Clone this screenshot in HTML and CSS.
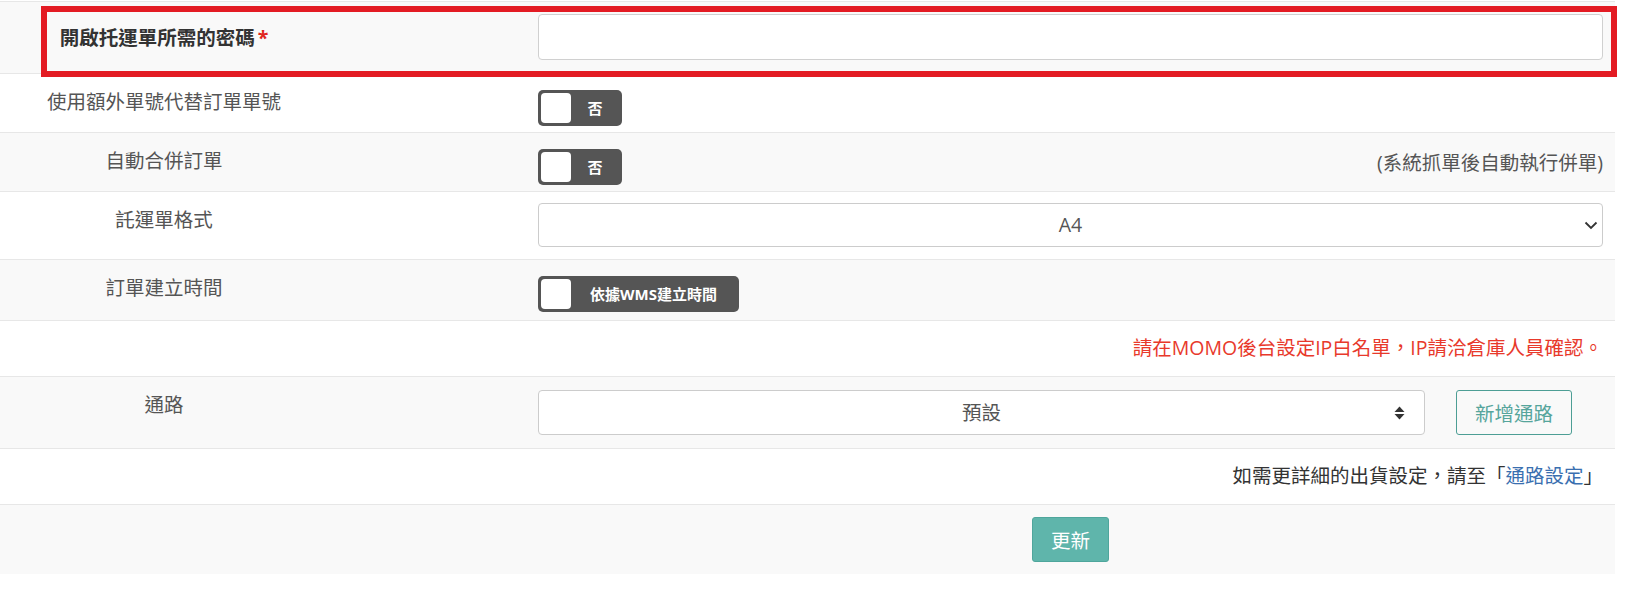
FILE: index.html
```html
<!DOCTYPE html>
<html lang="zh-Hant">

<head>
    <meta charset="UTF-8">
    <title>出貨設定</title>
    <link rel="stylesheet" href="styles.css">
</head>

<body>
    <div class="settings">
        <div class="settings-row row-input">
            <label class="field-label required-label">開啟托運單所需的密碼<span class="required">*</span></label>
            <div class="field-control">
                <input type="text" class="text-input">
            </div>
            <div class="highlight-box"></div>
        </div>

        <div class="settings-row row-toggle">
            <div class="field-label">使用額外單號代替訂單單號</div>
            <div class="field-control">
                <span class="toggle"><span class="toggle-knob"></span><span class="toggle-text">否</span></span>
            </div>
        </div>

        <div class="settings-row row-toggle">
            <div class="field-label">自動合併訂單</div>
            <div class="field-control split">
                <span class="toggle"><span class="toggle-knob"></span><span class="toggle-text">否</span></span>
                <span class="note">(系統抓單後自動執行併單)</span>
            </div>
        </div>

        <div class="settings-row row-select">
            <div class="field-label">託運單格式</div>
            <div class="field-control">
                <div class="select">
                    A4
                    <svg class="select-arrow" width="14" height="9" viewBox="0 0 14 9">
                        <path d="M1.5 1.5 L7 7 L12.5 1.5" fill="none" stroke="#333" stroke-width="1.8" />
                    </svg>
                </div>
            </div>
        </div>

        <div class="settings-row row-toggle row-toggle-tall">
            <div class="field-label">訂單建立時間</div>
            <div class="field-control">
                <span class="toggle toggle-wide"><span class="toggle-knob"></span><span class="toggle-text">依據WMS建立時間</span></span>
            </div>
        </div>

        <div class="settings-row row-text">
            <div class="field-label"></div>
            <div class="field-control text-right warning">請在MOMO後台設定IP白名單，IP請洽倉庫人員確認。</div>
        </div>

        <div class="settings-row row-channel">
            <div class="field-label">通路</div>
            <div class="field-control channel">
                <div class="select">
                    預設
                    <svg class="sort-icon" width="11" height="14" viewBox="0 0 11 14">
                        <polygon points="0.5,6 5.5,0.5 10.5,6" fill="#333" />
                        <polygon points="0.5,8 10.5,8 5.5,13.5" fill="#333" />
                    </svg>
                </div>
                <button class="btn-outline">新增通路</button>
            </div>
        </div>

        <div class="settings-row row-text">
            <div class="field-label"></div>
            <div class="field-control text-right">如需更詳細的出貨設定，請至「<a href="#" class="link">通路設定</a>」</div>
        </div>

        <div class="settings-row row-submit">
            <div class="field-label"></div>
            <div class="field-control center">
                <button class="btn-primary">更新</button>
            </div>
        </div>
    </div>
</body>

</html>
```

FILE: styles.css
```css
/* Global styles */
* {
    box-sizing: border-box;
    margin: 0;
    padding: 0;
}

body {
    background-color: #fff;
    color: #333;
    font-family: "Open Sans", "Noto Sans CJK TC", sans-serif;
    font-size: 19.5px;
    line-height: 28px;
}

/* Settings table */
.settings {
    width: 1615px;
    margin-top: 1px;
}

.settings-row {
    display: grid;
    grid-template-columns: 328px 210px 1065px;
    padding-right: 12px;
    border-top: 1px solid #e7e7e7;
}

.settings-row:nth-child(odd) {
    background-color: #f9f9f9;
}

.field-label {
    grid-column: 1;
    text-align: center;
    color: #555;
    padding: 14px 0;
}

.field-control {
    grid-column: 3;
}

.text-right {
    text-align: right;
}

.center {
    display: flex;
    justify-content: center;
}

/* Row variants */
.row-input {
    position: relative;
}

.row-input .field-control {
    padding: 12px 0 13px;
}

.required-label {
    align-self: center;
    padding: 0;
    color: #333;
    font-weight: bold;
}

.required {
    color: #e0261f;
    margin-left: 3px;
}

.row-toggle .field-control {
    padding: 16px 0 6px;
}

.row-toggle-tall .field-control {
    padding-bottom: 8px;
}

.row-select .field-control {
    padding: 11px 0 12px;
}

.row-channel .field-control {
    padding: 13px 31px 13px 0;
}

.row-text .field-control {
    padding: 13px 0 14px;
}

.row-submit .field-control {
    padding: 12px 0;
}

.split {
    display: flex;
    justify-content: space-between;
    align-items: flex-start;
}

.split .note {
    color: #555;
}

.warning {
    color: #e8392b;
}

.link {
    color: #3a6fb0;
    text-decoration: none;
}

/* Red highlight around the password row */
.highlight-box {
    position: absolute;
    z-index: 2;
    left: 41px;
    top: 4px;
    width: 1576px;
    height: 71px;
    border: 6px solid #e31b23;
    pointer-events: none;
}

/* Inputs */
.text-input {
    display: block;
    width: 100%;
    height: 46px;
    border: 1px solid #d0d0d0;
    border-radius: 4px;
    background-color: #fff;
}

.select {
    position: relative;
    height: 44px;
    border: 1px solid #ccc;
    border-radius: 4px;
    background-color: #fff;
    color: #555;
    display: flex;
    align-items: center;
    justify-content: center;
}

.select-arrow {
    position: absolute;
    right: 4px;
    top: 17px;
}

.sort-icon {
    position: absolute;
    right: 19px;
    top: 15px;
}

.channel {
    display: grid;
    grid-template-columns: 1fr 116px;
    column-gap: 31px;
}

.channel .select {
    height: 45px;
}

/* Toggle switch */
.toggle {
    display: inline-flex;
    align-items: center;
    width: 84px;
    height: 36px;
    padding: 3px;
    background-color: #555;
    border-radius: 5px;
    vertical-align: top;
}

.toggle-wide {
    width: 201px;
}

.toggle-knob {
    width: 30px;
    height: 30px;
    background-color: #fff;
    border-radius: 4px;
}

.toggle-text {
    flex: 1;
    text-align: center;
    color: #fff;
    font-weight: bold;
    font-size: 15px;
}

/* Buttons */
.btn-outline {
    height: 45px;
    border: 1px solid #4d9e95;
    border-radius: 3px;
    background: transparent;
    color: #56a59c;
    font-family: inherit;
    font-size: 19.5px;
}

.btn-primary {
    width: 77px;
    height: 45px;
    border: 1px solid #4fa69c;
    border-radius: 3px;
    background-color: #5fb5ab;
    color: #fff;
    font-family: inherit;
    font-size: 19.5px;
}
```
